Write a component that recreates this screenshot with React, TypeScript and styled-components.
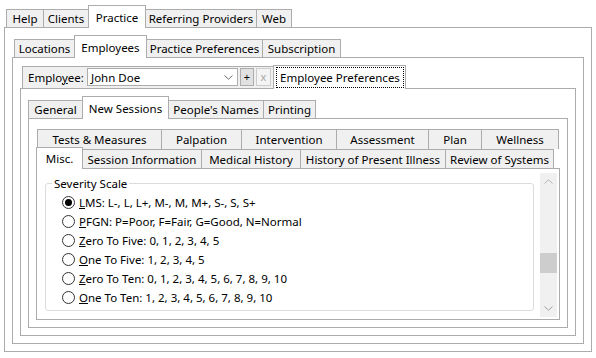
import React from 'react';
import styled, { createGlobalStyle, css } from 'styled-components';

type TabDef = { label: React.ReactNode; w: number };

const GlobalStyle = createGlobalStyle`
  html, body {
    margin: 0;
    padding: 0;
    background: #fff;
  }
  body {
    font-family: "Noto Sans", "Open Sans", sans-serif;
    font-size: 11.5px;
    color: #000;
  }
`;

const Screen = styled.div`
  box-sizing: border-box;
  width: 596px;
  height: 358px;
  padding: 5px 4px 6px 4px;
  display: flex;
  flex-direction: column;
  overflow: hidden;
`;

const TabControl = styled.div`
  flex: 1;
  min-height: 0;
  display: flex;
  flex-direction: column;
`;

const TabStrip = styled.div<{ $h: number; $pad: number }>`
  position: relative;
  z-index: 1;
  height: ${(p) => p.$h}px;
  padding-left: ${(p) => p.$pad}px;
  display: flex;
  align-items: flex-end;
  flex: none;
`;

const MultiStrip = styled.div`
  position: relative;
  z-index: 1;
  height: 42px;
  flex: none;
  display: flex;
  flex-direction: column;
  justify-content: flex-end;
`;

const TabRow = styled.div<{ $h: number; $pad: number }>`
  height: ${(p) => p.$h}px;
  padding-left: ${(p) => p.$pad}px;
  display: flex;
  align-items: flex-end;
`;

const Tab = styled.div<{ $w: number; $h: number; $active?: boolean }>`
  box-sizing: border-box;
  width: ${(p) => p.$w}px;
  height: ${(p) => p.$h}px;
  margin-left: -1px;
  border: 1px solid #acacac;
  border-bottom: none;
  background: #f0f0f0;
  display: flex;
  align-items: center;
  justify-content: center;
  white-space: nowrap;
  flex: none;
  &:first-child {
    margin-left: 0;
  }
  ${(p) =>
    p.$active &&
    css`
      position: relative;
      z-index: 2;
      background: #fff;
      margin-bottom: -1px;
    `}
`;

const FocusRing = styled.div`
  align-self: stretch;
  flex: 1;
  margin: 1px 1px 1px 2px;
  border: 1px dotted #000;
  display: flex;
  align-items: center;
  justify-content: center;
`;

const TabPanel = styled.div<{ $pad?: string }>`
  flex: 1;
  min-height: 0;
  border: 1px solid #acacac;
  background: #fff;
  padding: ${(p) => p.$pad ?? '7px'};
  display: flex;
  flex-direction: column;
`;

const EmployeeBar = styled.div`
  box-sizing: border-box;
  width: 252px;
  height: 22px;
  border: 1px solid #acacac;
  border-bottom: none;
  background: #f0f0f0;
  padding: 0 0 1px 5px;
  display: flex;
  align-items: center;
  flex: none;
`;

const FieldLabel = styled.span`
  width: 59px;
  flex: none;
`;

const Combo = styled.div`
  box-sizing: border-box;
  width: 151px;
  height: 18px;
  border: 1px solid #adadad;
  background: #fff;
  display: flex;
  align-items: center;
  justify-content: space-between;
  padding: 0 4px 0 3px;
  flex: none;
`;

const SmallButton = styled.div<{ $disabled?: boolean }>`
  box-sizing: border-box;
  width: ${(p) => (p.$disabled ? 15 : 14)}px;
  height: 18px;
  margin-left: 2px;
  border: 1px solid ${(p) => (p.$disabled ? '#cccccc' : '#adadad')};
  background: ${(p) => (p.$disabled ? '#f4f4f4' : '#e1e1e1')};
  color: ${(p) => (p.$disabled ? '#a6a6a6' : '#000')};
  display: flex;
  align-items: center;
  justify-content: center;
  font-size: 11px;
  line-height: 1;
  padding-bottom: 1px;
  flex: none;
`;

const Page = styled.div`
  flex: 1;
  min-height: 0;
  display: flex;
  padding: 4px 2px 2px 1px;
`;

const ScrollContent = styled.div`
  flex: 1;
  padding: 3px 6px 0 7px;
`;

const GroupBox = styled.fieldset`
  margin: 0;
  padding: 2px 0 3px 0;
  border: 1px solid #dcdcdc;
  border-radius: 3px;
`;

const GroupTitle = styled.legend`
  margin-left: 6px;
  padding: 0 2px;
  line-height: 15px;
`;

const RadioList = styled.div`
  padding-left: 16px;
  display: flex;
  flex-direction: column;
`;

const RadioRow = styled.label`
  height: 19px;
  display: flex;
  align-items: center;
  white-space: nowrap;
`;

const RadioCircle = styled.span<{ $checked?: boolean }>`
  box-sizing: border-box;
  width: 13px;
  height: 13px;
  margin-right: 4px;
  border-radius: 50%;
  border: 1px solid #333;
  background: #fff;
  display: flex;
  align-items: center;
  justify-content: center;
  flex: none;
  &::after {
    content: '';
    width: 7px;
    height: 7px;
    border-radius: 50%;
    background: #000;
    display: ${(p) => (p.$checked ? 'block' : 'none')};
  }
`;

const ScrollBar = styled.div`
  width: 17px;
  flex: none;
  background: #f0f0f0;
  display: flex;
  flex-direction: column;
`;

const ScrollArrow = styled.div`
  height: 17px;
  display: flex;
  align-items: center;
  justify-content: center;
  flex: none;
`;

const ScrollTrack = styled.div`
  flex: 1;
`;

const ScrollThumb = styled.div<{ $top: number; $len: number }>`
  margin-top: ${(p) => p.$top}px;
  height: ${(p) => p.$len}px;
  background: #cdcdcd;
`;

const Chevron = ({ up, color }: { up?: boolean; color: string }) => (
  <svg width="9" height="5" viewBox="0 0 9 5">
    <polyline
      points={up ? '0.5,4.5 4.5,0.8 8.5,4.5' : '0.5,0.5 4.5,4.2 8.5,0.5'}
      fill="none"
      stroke={color}
      strokeWidth="1"
    />
  </svg>
);

const Tabs = ({ tabs, active, h, pad }: { tabs: TabDef[]; active: number; h: number; pad: number }) => (
  <TabStrip $h={h} $pad={pad}>
    {tabs.map((t, i) => (
      <Tab key={i} $w={t.w} $h={i === active ? h + 1 : h - 4} $active={i === active}>
        {t.label}
      </Tab>
    ))}
  </TabStrip>
);

const mainTabs: TabDef[] = [
  { label: 'Help', w: 38 },
  { label: 'Clients', w: 46 },
  { label: 'Practice', w: 58 },
  { label: 'Referring Providers', w: 112 },
  { label: 'Web', w: 36 },
];

const practiceTabs: TabDef[] = [
  { label: 'Locations', w: 61 },
  { label: 'Employees', w: 73 },
  { label: 'Practice Preferences', w: 117 },
  { label: 'Subscription', w: 79 },
];

const prefTabs: TabDef[] = [
  { label: 'General', w: 55 },
  { label: 'New Sessions', w: 87 },
  { label: "People's Names", w: 96 },
  { label: 'Printing', w: 53 },
];

const upperSessionTabs: TabDef[] = [
  { label: 'Tests & Measures', w: 125 },
  { label: 'Palpation', w: 81 },
  { label: 'Intervention', w: 96 },
  { label: 'Assessment', w: 93 },
  { label: 'Plan', w: 54 },
  { label: 'Wellness', w: 78 },
];

const lowerSessionTabs: TabDef[] = [
  { label: 'Misc.', w: 47 },
  { label: 'Session Information', w: 120 },
  { label: 'Medical History', w: 100 },
  { label: 'History of Present Illness', w: 146 },
  { label: 'Review of Systems', w: 109 },
];

const scales = [
  { key: 'L', rest: 'MS: L-, L, L+, M-, M, M+, S-, S, S+' },
  { key: 'P', rest: 'FGN: P=Poor, F=Fair, G=Good, N=Normal' },
  { key: 'Z', rest: 'ero To Five: 0, 1, 2, 3, 4, 5' },
  { key: 'O', rest: 'ne To Five: 1, 2, 3, 4, 5' },
  { key: 'Z', rest: 'ero To Ten: 0, 1, 2, 3, 4, 5, 6, 7, 8, 9, 10' },
  { key: 'O', rest: 'ne To Ten: 1, 2, 3, 4, 5, 6, 7, 8, 9, 10' },
];

const MiscPage = () => (
  <Page>
    <ScrollContent>
      <GroupBox>
        <GroupTitle>Severity Scale</GroupTitle>
        <RadioList>
          {scales.map((s, i) => (
            <RadioRow key={i}>
              <RadioCircle $checked={i === 0} />
              <span>
                <u>{s.key}</u>
                {s.rest}
              </span>
            </RadioRow>
          ))}
        </RadioList>
      </GroupBox>
    </ScrollContent>
    <ScrollBar>
      <ScrollArrow>
        <Chevron up color="#b4b4b4" />
      </ScrollArrow>
      <ScrollTrack>
        <ScrollThumb $top={63} $len={20} />
      </ScrollTrack>
      <ScrollArrow>
        <Chevron color="#a0a0a0" />
      </ScrollArrow>
    </ScrollBar>
  </Page>
);

const App: React.FC = () => (
  <Screen>
    <GlobalStyle />
    <TabControl>
      <Tabs tabs={mainTabs} active={2} h={22} pad={2} />
      <TabPanel>
        <TabControl>
          <Tabs tabs={practiceTabs} active={1} h={22} pad={2} />
          <TabPanel>
            <TabControl>
              <TabStrip $h={23} $pad={2}>
                <EmployeeBar>
                  <FieldLabel>
                    Emplo<u>y</u>ee:
                  </FieldLabel>
                  <Combo>
                    <span>John Doe</span>
                    <Chevron color="#707070" />
                  </Combo>
                  <SmallButton style={{ marginLeft: 2 }}>+</SmallButton>
                  <SmallButton $disabled>x</SmallButton>
                </EmployeeBar>
                <Tab $w={133} $h={24} $active>
                  <FocusRing>Employee Preferences</FocusRing>
                </Tab>
              </TabStrip>
              <TabPanel>
                <TabControl>
                  <Tabs tabs={prefTabs} active={1} h={22} pad={0} />
                  <TabPanel>
                    <TabControl>
                      <MultiStrip>
                        <TabRow $h={20} $pad={1}>
                          {upperSessionTabs.map((t, i) => (
                            <Tab key={i} $w={t.w} $h={20}>
                              {t.label}
                            </Tab>
                          ))}
                        </TabRow>
                        <TabRow $h={19} $pad={0}>
                          {lowerSessionTabs.map((t, i) => (
                            <Tab key={i} $w={t.w} $h={i === 0 ? 22 : 19} $active={i === 0}>
                              {t.label}
                            </Tab>
                          ))}
                        </TabRow>
                      </MultiStrip>
                      <TabPanel $pad="0">
                        <MiscPage />
                      </TabPanel>
                    </TabControl>
                  </TabPanel>
                </TabControl>
              </TabPanel>
            </TabControl>
          </TabPanel>
        </TabControl>
      </TabPanel>
    </TabControl>
  </Screen>
);

export default App;
